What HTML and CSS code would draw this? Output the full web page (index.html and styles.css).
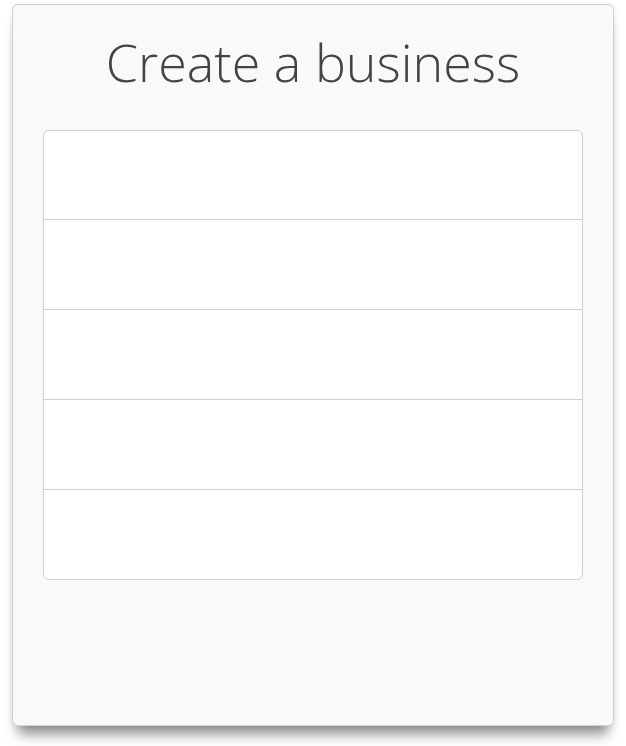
FILE: index.html
```html
<!DOCTYPE html>
<html>
<head>
<meta charset="utf-8">
<link rel="stylesheet" href="styles.css">
</head>
<body>
<div class="card">
  <h1 class="title">Create a business</h1>
  <div class="list">
    <div class="row"></div>
    <div class="row"></div>
    <div class="row"></div>
    <div class="row"></div>
    <div class="row"></div>
  </div>
</div>
</body>
</html>
```
FILE: styles.css
```css
html, body {
  margin: 0;
  padding: 0;
  background: #ffffff;
}
body {
  padding: 4px 12px 20px 12px;
  font-family: "Open Sans", "Liberation Sans", sans-serif;
}
.card {
  box-sizing: border-box;
  width: 602px;
  height: 722px;
  background: #f9f9f9;
  border: 1px solid #d2d2d2;
  border-radius: 6px;
  padding: 0 30px;
  box-shadow: 0 14px 12px -6px rgba(0, 0, 0, 0.45), 0 0 5px rgba(0, 0, 0, 0.08);
}
.title {
  margin: 0;
  padding-top: 26px;
  height: 125px;
  box-sizing: border-box;
  text-align: center;
  font-weight: 300;
  font-size: 52px;
  line-height: 1.2;
  color: #444444;
  white-space: nowrap;
}
.list {
  background: #ffffff;
  border: 1px solid #d0d0d0;
  border-radius: 6px;
  display: flex;
  flex-direction: column;
}
.row {
  height: 89px;
  border-top: 1px solid #d0d0d0;
}
.row:first-child {
  height: 88px;
  border-top: none;
}
```
